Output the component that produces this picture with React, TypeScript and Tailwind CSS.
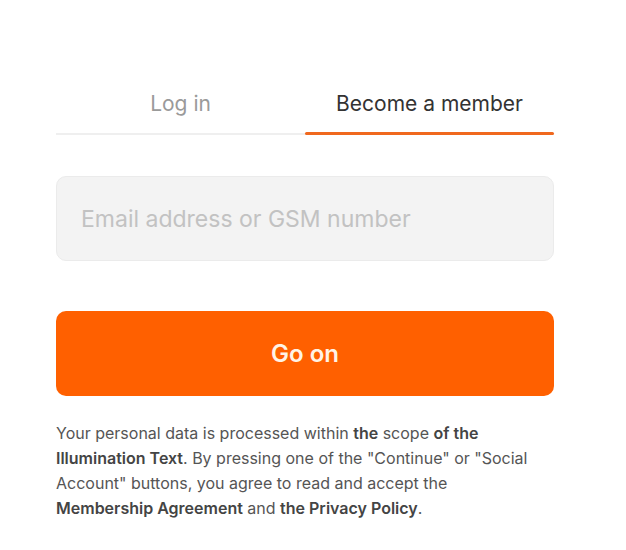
import React from "react";

export default function App() {
  return (
    <div className="min-h-[550px] w-full bg-white font-['Inter',sans-serif]">
      <div className="ml-[56px] w-[498px] pt-[89px]">
        {/* Tabs */}
        <div className="flex border-b-2 border-[#efefef]">
          <button className="flex-1 pb-[14px] text-center text-[21px] leading-[30px] text-[#9a9a9a]">
            Log in
          </button>
          <button className="relative flex-1 pb-[14px] text-center text-[21px] leading-[30px] text-[#333333]">
            Become a member
            <span className="absolute -bottom-[2px] left-0 right-0 h-[3px] rounded-full bg-[#f0681e]" />
          </button>
        </div>

        {/* Input */}
        <div className="mt-[41px]">
          <input
            type="text"
            placeholder="Email address or GSM number"
            className="h-[85px] w-full rounded-[10px] border border-[#ebebeb] bg-[#f3f3f3] px-[24px] text-[23px] text-[#333] outline-none placeholder:text-[#c2c2c2]"
          />
        </div>

        {/* Button */}
        <button className="mt-[50px] h-[85px] w-full rounded-[10px] bg-[#ff6000] text-[24px] font-semibold text-[#fff3e6]">
          Go on
        </button>

        {/* Legal */}
        <p className="mt-[25px] w-[476px] text-[16px] leading-[25px] text-[#555555]">
          Your personal data is processed within <b className="font-semibold text-[#444]">the</b> scope{" "}
          <b className="font-semibold text-[#444]">of the Illumination Text</b>. By pressing one of the "Continue" or "Social
          Account" buttons, you agree to read and accept the{" "}
          <b className="font-semibold text-[#444]">Membership Agreement</b> and{" "}
          <b className="font-semibold text-[#444]">the Privacy Policy</b>.
        </p>
      </div>
    </div>
  );
}
